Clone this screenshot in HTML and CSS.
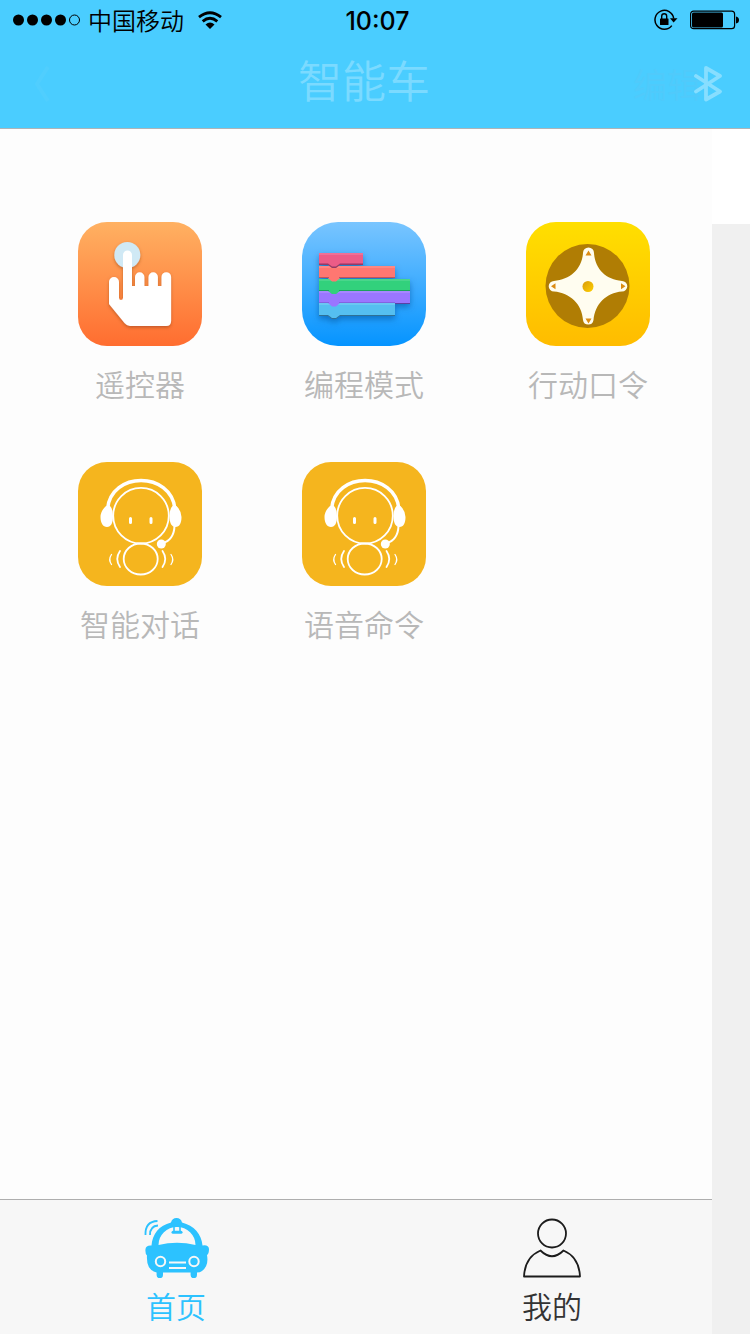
FILE: index.html
```html
<!DOCTYPE html>
<html lang="zh-CN">
<head>
<meta charset="utf-8">
<meta name="viewport" content="width=device-width, initial-scale=1">
<title>智能车</title>
<link rel="stylesheet" href="styles.css">
</head>
<body>
<div class="app">
  <header class="header">
    <div class="status">
      <div class="status-left">
        <svg class="signal" width="67" height="12" viewBox="0 0 67 12" aria-hidden="true">
          <circle cx="5.500" cy="6" r="5.500"/><circle cx="19.500" cy="6" r="5.500"/><circle cx="33.500" cy="6" r="5.500"/><circle cx="47.500" cy="6" r="5.500"/>
          <circle cx="61.500" cy="6" r="5" fill="none" stroke="#000"/>
        </svg>
        <span class="carrier">中国移动</span>
        <svg width="24" height="18" viewBox="0 0 24 18" fill="none" stroke="#000" stroke-width="2.800" aria-hidden="true">
          <path d="M1 6.200Q12-2.800 23 6.200M4.700 10.400Q12 4.200 19.300 10.400"/>
          <path d="M7.500 13.400Q12 9.500 16.500 13.400L12 18Z" fill="#000" stroke="none"/>
        </svg>
      </div>
      <time class="clock">10:07</time>
      <div class="status-right">
        <svg width="24" height="22" viewBox="0 0 24 22" aria-hidden="true">
          <path d="M17.800 16.600A9.400 9.400 0 1 1 19.700 9.500" fill="none" stroke="#000" stroke-width="1.500"/>
          <path d="M16 9.300h7.500L19.600 13.400Z"/>
          <rect x="6" y="9.500" width="8.500" height="6.500" rx=".5"/>
          <path d="M7.700 10V7.300a2.500 2.500 0 0 1 5 0V10" fill="none" stroke="#000" stroke-width="1.400"/>
        </svg>
        <svg width="49" height="20" viewBox="0 0 49 20" aria-hidden="true">
          <rect x=".6" y="1.100" width="44" height="17.600" rx="3" fill="none" stroke="#000" stroke-width="1.200"/>
          <rect x="2" y="2.500" width="31" height="15" rx="1.500"/>
          <path d="M46 6.500q3 .5 3 3.500t-3 3.500Z"/>
        </svg>
      </div>
    </div>
    <nav class="nav">
      <button class="nav-button back" type="button" aria-label="返回">
        <svg width="16" height="36" viewBox="0 0 16 36" fill="none" stroke="#50cefe" stroke-width="4"><path d="M14 1L3 18l11 17"/></svg>
      </button>
      <h1 class="title">智能车</h1>
      <div class="nav-actions">
        <button class="nav-button edit" type="button">编辑</button>
        <button class="nav-button bluetooth" type="button" aria-label="蓝牙">
          <svg width="28" height="36" viewBox="0 0 28 36" fill="none" stroke="#87deff" stroke-width="3.800" stroke-linecap="round" stroke-linejoin="round"><path d="M2 10L26 25.500L12 33.500V2L26 10L2 25.500"/></svg>
        </button>
      </div>
    </nav>
  </header>

  <div class="content">
    <div class="page">
      <main class="apps">
        <button class="tile" type="button">
          <svg class="tile-icon" viewBox="0 0 124 124" aria-hidden="true">
            <defs>
              <linearGradient id="orange" x2="0" y2="1"><stop stop-color="#ffb162"/><stop offset="1" stop-color="#ff6d30"/></linearGradient>
              <filter id="shade" x="-20%" y="-20%" width="150%" height="150%"><feDropShadow dx="0" dy="1.500" stdDeviation="1.500" flood-color="#873b16" flood-opacity=".5"/></filter>
            </defs>
            <rect width="124" height="124" rx="29" fill="url(#orange)"/>
            <g filter="url(#shade)">
              <circle cx="49.300" cy="33" r="13" fill="#d0e9f5"/>
              <path fill="#fff" d="M45 33a4.500 4.500 0 0 1 9 0V64H57V55a4.700 4.700 0 0 1 9.400 0V64H70.500V55a4.700 4.700 0 0 1 9.400 0V64H83.500V55a4.800 4.800 0 0 1 9.600 0V99q0 5-5 5H52q-3 0-5.500-3L31 82V60a5 5 0 0 1 10 0V76q0 2 2 2t2-2Z"/>
            </g>
          </svg>
          <span class="tile-label">遥控器</span>
        </button>

        <button class="tile" type="button">
          <svg class="tile-icon" viewBox="0 0 124 124" aria-hidden="true">
            <defs>
              <linearGradient id="blue" x2="0" y2="1"><stop stop-color="#79c5ff"/><stop offset="1" stop-color="#0594ff"/></linearGradient>
              <filter id="blocks" x="-20%" y="-20%" width="150%" height="150%"><feDropShadow dx="0" dy="3" stdDeviation="3" flood-color="#004b92" flood-opacity=".55"/></filter>
            </defs>
            <rect width="124" height="124" rx="36" fill="url(#blue)"/>
            <g filter="url(#blocks)">
              <path fill="#2f7196" d="M17 82h76v12H38l-4 3h-4l-4-3H17z"/>
              <path fill="#55bff0" d="M17 81h76v12H38l-4 3h-4l-4-3H17z"/>
              <path stroke="#fff" stroke-opacity=".25" d="M17 82h76"/>
              <path fill="#5a42a5" d="M93 71h15v11H93z"/>
              <path fill="#9a76ff" d="M17 69h91v12H38l-4 3.500h-4l-4-3.500H17z"/>
              <path stroke="#5a42a5" stroke-opacity=".35" d="M17 80.500h10M37 80.500h56"/>
              <path stroke="#fff" stroke-opacity=".25" d="M17 70h91"/>
              <path fill="#31d17b" d="M17 57h91v12H38l-4 3h-4l-4-3H17z"/>
              <path stroke="#188d51" stroke-opacity=".7" d="M17 68.500h10M37 68.500h71"/>
              <path stroke="#fff" stroke-opacity=".25" d="M17 58h91"/>
              <path fill="#ff7771" d="M17 44h76v12H38l-4 3.500h-4l-4-3.500H17z"/>
              <path stroke="#a64850" stroke-opacity=".7" d="M17 55.500h10M37 55.500h56"/>
              <path stroke="#fff" stroke-opacity=".25" d="M17 45h76"/>
              <path fill="#943b66" d="M17 32h44v11H38l-4 3h-4l-4-3H17z"/>
              <path fill="#ec5b87" d="M17 31h44v10.500H38l-4 3h-4l-4-3H17z"/>
              <path stroke="#fff" stroke-opacity=".25" d="M17 32h44"/>
            </g>
          </svg>
          <span class="tile-label">编程模式</span>
        </button>

        <button class="tile" type="button">
          <svg class="tile-icon" viewBox="0 0 124 124" aria-hidden="true">
            <defs>
              <linearGradient id="yellow" x2="0" y2="1"><stop stop-color="#ffdf00"/><stop offset="1" stop-color="#ffbc00"/></linearGradient>
              <linearGradient id="knob" x2="1" y2="1"><stop stop-color="#d99b0b"/><stop offset="1" stop-color="#ffd000"/></linearGradient>
            </defs>
            <rect width="124" height="124" rx="30" fill="url(#yellow)"/>
            <circle cx="61.500" cy="64" r="42" fill="#b07d04"/>
            <path fill="#fffdf0" d="M57 31a5.500 5.500 0 0 1 11 0C69 47 80 57.500 96 59a5.300 5.300 0 0 1 0 10.600C80 71 69 82 67.500 98a5.300 5.300 0 0 1-10.500 0C56 82 44 71 28 69.600A5.300 5.300 0 0 1 28 59C44 57.500 56 47 57 31Z"/>
            <circle cx="62" cy="64.500" r="5.500" fill="url(#knob)"/>
            <path fill="#dc8c14" d="M62.500 28.500l3 5h-6zM62.500 101.500l3-5h-6zM25 64.300l4.500-3v6zM99.500 64.300l-4.500-3v6z"/>
          </svg>
          <span class="tile-label">行动口令</span>
        </button>

        <button class="tile" type="button">
          <svg class="tile-icon" viewBox="0 0 124 124" aria-hidden="true">
            <defs>
              <g id="robot" fill="none" stroke="#fff" stroke-linecap="round">
                <circle cx="63" cy="53.700" r="27.800" stroke-width="1.800"/>
                <ellipse cx="62.700" cy="97" rx="17" ry="15.500" stroke-width="1.800"/>
                <path d="M29.500 47C33 9 93 9 97 47" stroke-width="3.500" stroke-linecap="butt"/>
                <path d="M28 44h4q3 3 3 10c0 7-2 11-6 11s-6.500-4-6.500-10q0-6 5.500-11ZM98.500 44h-4q-3 3-3 10c0 7 2 11 6 11s6-4 6-10q0-6-5-11Z" fill="#fff" stroke="none"/>
                <path d="M52.500 56.500v4M73 56.500v4" stroke-width="3"/>
                <path d="M96.500 64Q96 78 84 81.500" stroke-width="2"/>
                <circle cx="83.300" cy="82" r="4.500" fill="#fff" stroke="none"/>
                <path d="M42 89q-5.500 8 0 16M84.500 89q5.500 8 0 16" stroke-width="1.800"/>
                <path d="M33.500 92.500q-3.500 5 0 10M93 92.500q3.500 5 0 10" stroke-width="1.300"/>
              </g>
            </defs>
            <rect width="124" height="124" rx="29" fill="#f5b51e"/>
            <use href="#robot"/>
          </svg>
          <span class="tile-label">智能对话</span>
        </button>

        <button class="tile" type="button">
          <svg class="tile-icon" viewBox="0 0 124 124" aria-hidden="true">
            <rect width="124" height="124" rx="29" fill="#f5b51e"/>
            <use href="#robot"/>
          </svg>
          <span class="tile-label">语音命令</span>
        </button>
      </main>

      <nav class="tabs">
        <button class="tab tab-active" type="button" aria-current="page">
          <svg width="66" height="60" viewBox="-1 0 66 60" aria-hidden="true">
            <g fill="none" stroke="#2cc2ff" stroke-width="1.800"><path d="M1.500 17Q1 3.500 13.500 3M6 17Q6 8 14 7.500"/></g>
            <path fill="#2cc2ff" d="M27 4.500q1-4.500 5.500-4.500t5.500 4.500C50 7.500 57.500 16 58.500 27.500q6-1 6.500 3.500 0 5-2 6 2 11-5 16-2 1.500-5 1.500V57a3.200 3.200 0 0 1-6.400 0V54.500H19V57a3.200 3.200 0 0 1-6.400 0V54.500Q2 52 3 37.500 1 36 1.500 31q.5-4 6-3.500C8.500 16 15 7.500 27 4.500Z"/>
            <path fill="#f7f7f7" d="M14.500 27A18.500 18 0 0 1 51.500 27Q33 22.500 14.500 27Z"/>
            <path fill="none" stroke="#2cc2ff" stroke-width="1.600" d="M30 8v6M36 8v6"/>
            <rect x="27.500" y="12.800" width="11" height="3" rx="1.500" fill="#2cc2ff"/>
            <g fill="none" stroke="#f7f7f7" stroke-width="2"><circle cx="16.500" cy="43.500" r="4.700"/><circle cx="50" cy="43.500" r="4.700"/><path d="M25 44.500h17M25 50h17"/></g>
          </svg>
          <span class="tab-label">首页</span>
        </button>
        <button class="tab" type="button">
          <svg width="60" height="60" viewBox="0 0 60 60" fill="none" stroke="#1c1c1c" stroke-width="1.800" stroke-linejoin="round" aria-hidden="true">
            <circle cx="30" cy="15.500" r="14"/>
            <path d="M18.500 32.500Q30 44 41.500 32.500Q57 39 58 58.500H2Q3 39 18.500 32.500Z"/>
          </svg>
          <span class="tab-label">我的</span>
        </button>
      </nav>
    </div>
    <aside class="underlay"></aside>
  </div>
</div>
</body>
</html>
```
FILE: styles.css
```css
* {
  box-sizing: border-box;
}

body {
  margin: 0;
  font-family: "Noto Sans CJK SC", sans-serif;
  font-weight: 350;
}

button {
  margin: 0;
  padding: 0;
  border: 0;
  background: none;
  color: inherit;
  font: inherit;
  cursor: pointer;
}

svg {
  display: block;
  flex: none;
}

.app {
  display: flex;
  flex-direction: column;
  min-height: 100vh;
}

.header {
  background: #4acdff;
  border-bottom: 1px solid #aeb4b8;
}

.status {
  display: grid;
  grid-template-columns: 1fr auto 1fr;
  align-items: center;
  height: 40px;
  padding: 0 11px 0 13px;
  color: #000;
}

.status-left,
.status-right {
  display: flex;
  align-items: center;
}

.status-right {
  justify-content: flex-end;
  gap: 12px;
}

.signal {
  margin-right: 8px;
}

.carrier {
  margin-right: 14px;
  font-size: 24px;
  line-height: 40px;
}

.clock {
  padding: 2px 0 0 3px;
  font-family: Inter, sans-serif;
  font-size: 25px;
  font-weight: 550;
  line-height: 38px;
}

.nav {
  display: grid;
  grid-template-columns: 1fr auto 1fr;
  align-items: center;
  height: 88px;
  padding: 0 28px 0 6px;
}

.back {
  justify-self: start;
  padding-left: 28px;
}

.title {
  align-self: start;
  margin: 0;
  color: #7bdaff;
  font-size: 44px;
  font-weight: 350;
  line-height: 78px;
}

.nav-actions {
  display: flex;
  align-items: center;
  justify-content: flex-end;
}

.edit {
  margin-right: -7px;
  color: #50cafb;
  font-size: 34px;
  line-height: 40px;
}

.content {
  display: flex;
  flex: 1;
}

.page {
  display: flex;
  flex: 1;
  flex-direction: column;
  background: #fdfdfd;
}

.apps {
  display: grid;
  flex: 1;
  grid-template-columns: repeat(3, 1fr);
  align-content: start;
  row-gap: 59px;
  padding: 93px 12px 59px 28px;
}

.tile {
  display: flex;
  flex-direction: column;
  align-items: center;
  gap: 17px;
  color: #b8b8b8;
}

.tile-icon {
  width: 124px;
  height: 124px;
}

.tile-label,
.tab-label {
  font-size: 30px;
  line-height: 40px;
}

.tabs {
  display: flex;
  justify-content: space-between;
  padding: 18px 64px 9px 80px;
  background: #f7f7f7;
  border-top: 1px solid #aeaeae;
}

.tab {
  display: flex;
  flex-direction: column;
  align-items: center;
  gap: 7px;
  width: 192px;
  color: #333;
}

.tab-active {
  color: #2cc2ff;
}

.underlay {
  width: 38px;
  padding-top: 95px;
  background: #f0f0f0 content-box;
}
```
